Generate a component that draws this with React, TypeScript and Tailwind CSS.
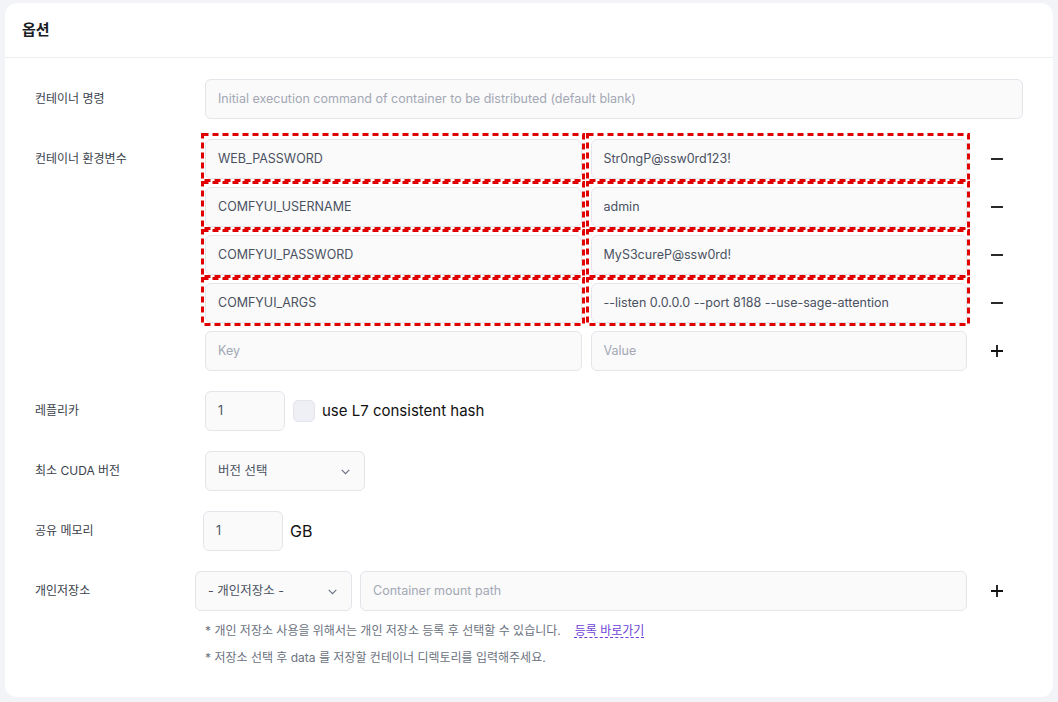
import React from "react";

const font = { fontFamily: "Inter, 'Noto Sans CJK KR', sans-serif" };

const inputCls =
  "h-10 rounded-[6px] border border-[#e3e5eb] bg-[#fafafb] px-3 flex items-center text-[12.5px] text-[#4a5160] min-w-0";

function Field({ value, placeholder, className = "" }: { value?: string; placeholder?: string; className?: string }) {
  return (
    <div className={`${inputCls} ${className}`}>
      {value ? <span className="truncate">{value}</span> : <span className="text-[#a3a8b4] truncate">{placeholder}</span>}
    </div>
  );
}

function Minus() {
  return (
    <div className="w-[56px] shrink-0 h-10 flex items-center justify-center pl-1">
      <svg width="14" height="14" viewBox="0 0 14 14"><path d="M1 7h12" stroke="#111" strokeWidth="1.8" /></svg>
    </div>
  );
}
function Plus() {
  return (
    <div className="w-[56px] shrink-0 h-10 flex items-center justify-center pl-1">
      <svg width="14" height="14" viewBox="0 0 14 14"><path d="M1 7h12M7 1v12" stroke="#111" strokeWidth="1.8" /></svg>
    </div>
  );
}
function Chevron() {
  return (
    <svg width="13" height="13" viewBox="0 0 12 12"><path d="M2.5 4.5L6 8l3.5-3.5" stroke="#6b7280" strokeWidth="1.1" fill="none" /></svg>
  );
}

function Row({ label, children }: { label: string; children: React.ReactNode }) {
  return (
    <div className="flex items-start">
      <div className="w-[170px] shrink-0 h-10 flex items-center text-[12px] text-[#3a3f4b]">{label}</div>
      <div className="flex-1 min-w-0">{children}</div>
    </div>
  );
}

const envs = [
  ["WEB_PASSWORD", "Str0ngP@ssw0rd123!"],
  ["COMFYUI_USERNAME", "admin"],
  ["COMFYUI_PASSWORD", "MyS3cureP@ssw0rd!"],
  ["COMFYUI_ARGS", "--listen 0.0.0.0 --port 8188 --use-sage-attention"],
];

export default function App() {
  return (
    <div className="w-[1058px] h-[702px] bg-[#f3f4f8] pt-[3px] px-[5px]" style={font}>
      <div className="w-[1048px] h-[694px] bg-white rounded-[12px] flex flex-col">
        <div className="h-[55px] border-b border-[#eceef2] flex items-center px-[17px] text-[15px] font-bold text-[#1a1d24]">
          옵션
        </div>
        <div className="px-[30px] pt-[21px] flex flex-col gap-5">
          <Row label="컨테이너 명령">
            <Field placeholder="Initial execution command of container to be distributed (default blank)" />
          </Row>
          <Row label="컨테이너 환경변수">
            <div className="relative flex flex-col gap-2">
              {envs.map(([k, v]) => (
                <div key={k} className="flex">
                  <div className="flex-1 flex gap-[9px]">
                    <Field value={k} className="flex-1" />
                    <Field value={v} className="flex-1" />
                  </div>
                  <Minus />
                </div>
              ))}
              <div className="flex">
                <div className="flex-1 flex gap-[9px]">
                  <Field placeholder="Key" className="flex-1" />
                  <Field placeholder="Value" className="flex-1" />
                </div>
                <Plus />
              </div>
              <svg className="absolute left-[-6px] top-[-8px] pointer-events-none" width="780" height="200" viewBox="0 0 780 200">
                {[0, 1, 2, 3].map((i) => (
                  <g key={i} fill="none" stroke="#e00000" strokeWidth="3" strokeDasharray="6 4">
                    <rect x={3.5} y={3.5 + i * 48} width={381} height={46} />
                    <rect x={388.5} y={3.5 + i * 48} width={381} height={46} />
                  </g>
                ))}
              </svg>
            </div>
          </Row>
          <Row label="레플리카">
            <div className="flex items-center gap-2">
              <Field value="1" className="w-20" />
              <div className="w-[22px] h-[22px] rounded-[5px] border border-[#e3e5eb] bg-[#eef0f5]" />
              <span className="text-[15px] text-[#111] -ml-[1px]">use L7 consistent hash</span>
            </div>
          </Row>
          <Row label="최소 CUDA 버전">
            <div className={`${inputCls} w-40 justify-between`}>
              <span>버전 선택</span>
              <Chevron />
            </div>
          </Row>
          <Row label="공유 메모리">
            <div className="flex items-center gap-[7px] -ml-[2px]">
              <Field value="1" className="w-20" />
              <span className="text-[16px] text-[#111]">GB</span>
            </div>
          </Row>
          <Row label="개인저장소">
            <div className="flex -ml-[10px]">
              <div className="flex-1 flex gap-2">
                <div className={`${inputCls} w-[157px] shrink-0 justify-between`}>
                  <span>- 개인저장소 -</span>
                  <Chevron />
                </div>
                <Field placeholder="Container mount path" className="flex-1" />
              </div>
              <Plus />
            </div>
            <div className="mt-[10px] text-[12px] text-[#6b7280] leading-[20px]">
              * 개인 저장소 사용을 위해서는 개인 저장소 등록 후 선택할 수 있습니다.
              <span className="ml-[14px] text-[#6d3fd8] underline decoration-dashed underline-offset-2">등록 바로가기</span>
            </div>
            <div className="mt-[7px] text-[12px] text-[#6b7280] leading-[20px]">
              * 저장소 선택 후 data 를 저장할 컨테이너 디렉토리를 입력해주세요.
            </div>
          </Row>
        </div>
      </div>
    </div>
  );
}
